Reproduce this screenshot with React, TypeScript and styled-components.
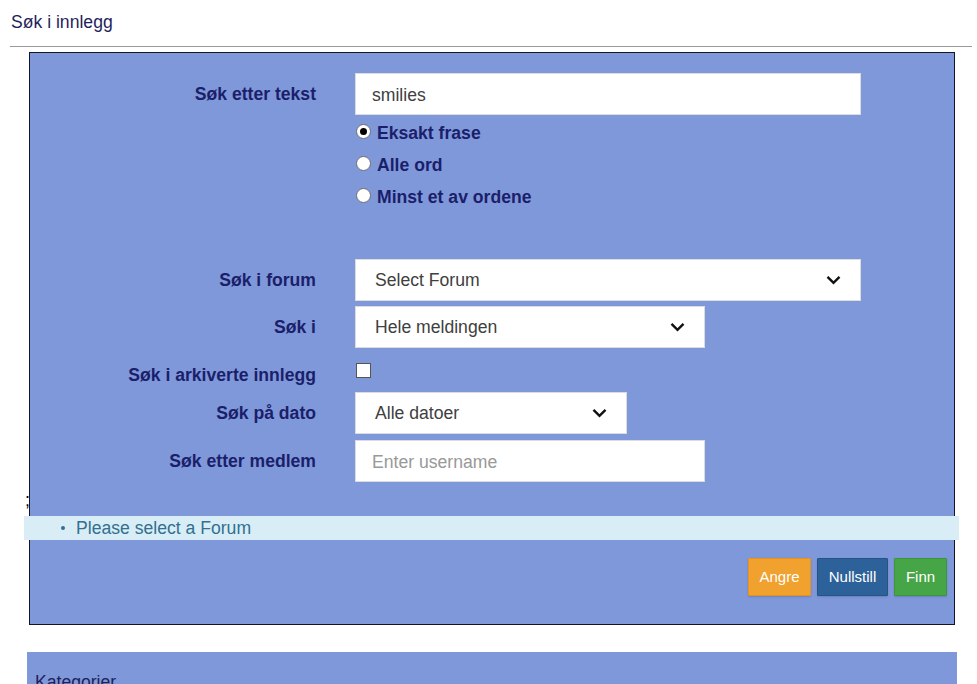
import React from "react";
import styled, { createGlobalStyle } from "styled-components";

const GlobalStyle = createGlobalStyle`
  html, body { margin: 0; padding: 0; background: #ffffff; }
  body { font-family: "Liberation Sans", Arial, sans-serif; }
  * { box-sizing: border-box; }
`;

const Page = styled.div`
  width: 977px;
  height: 684px;
  overflow: hidden;
`;

const Header = styled.div`
  margin: 0 5px 0 10px;
  padding: 12px 0 14px 1px;
  border-bottom: 1px solid #9a9a9a;
`;

const Title = styled.h1`
  margin: 0;
  font-size: 17.6px;
  line-height: 20px;
  font-weight: normal;
  color: #1f1f5c;
`;

const Panel = styled.form`
  margin: 5px 0 0 29px;
  width: 926px;
  background: #7f98da;
  border: 1px solid #141428;
  padding: 20px 0 28px 0;
`;

const FormRow = styled.div<{ $mt?: number; $h?: number; $top?: boolean }>`
  display: grid;
  grid-template-columns: 286px 1fr;
  column-gap: 39px;
  align-items: ${(p) => (p.$top ? "start" : "center")};
  margin-top: ${(p) => p.$mt ?? 0}px;
  height: ${(p) => (p.$h ? `${p.$h}px` : "auto")};
`;

const Label = styled.label<{ $pt?: number }>`
  text-align: right;
  font-size: 17.6px;
  line-height: 20px;
  font-weight: bold;
  color: #1b1f6b;
  padding-top: ${(p) => p.$pt ?? 0}px;
`;

const TextInput = styled.input<{ $w: number }>`
  width: ${(p) => p.$w}px;
  height: 42px;
  border: 1px solid #dcdcdc;
  background: #fff;
  padding: 2px 16px 0 16px;
  font-family: "Liberation Sans", Arial, sans-serif;
  font-size: 17.6px;
  color: #404040;
  outline: none;
  &::placeholder { color: #999; }
`;

const SelectBox = styled.div<{ $w: number }>`
  width: ${(p) => p.$w}px;
  height: 42px;
  border: 1px solid #dcdcdc;
  background: #fff;
  padding: 0 19px 0 19px;
  display: flex;
  align-items: center;
  justify-content: space-between;
  font-size: 17.6px;
  color: #404040;
`;

const RadioGroup = styled.div`
  display: flex;
  flex-direction: column;
  margin-top: 2px;
`;

const RadioRow = styled.label`
  display: flex;
  align-items: center;
  height: 32px;
  gap: 6px;
  font-size: 17.6px;
  font-weight: bold;
  color: #1b1f6b;
  padding-left: 1px;
`;

const RadioDot = styled.span<{ $checked?: boolean }>`
  width: 15px;
  height: 15px;
  border-radius: 50%;
  border: 1px solid #6e6e6e;
  background: #fff;
  margin-top: -4px;
  display: flex;
  align-items: center;
  justify-content: center;
  &::after {
    content: "";
    width: 7px;
    height: 7px;
    border-radius: 50%;
    background: ${(p) => (p.$checked ? "#000" : "transparent")};
  }
`;

const CheckBox = styled.span`
  display: block;
  width: 15px;
  height: 15px;
  margin-top: 15px;
  margin-left: 1px;
  border: 1px solid #555;
  background: #fff;
`;

const Semicolon = styled.div`
  margin: 8px 0 0 -5px;
  height: 20px;
  font-size: 17.6px;
  line-height: 20px;
  color: #000;
`;

const Alert = styled.ul`
  margin: 6px -5px 0 -6px;
  padding: 0 0 0 37px;
  height: 24px;
  background: #d9edf7;
  list-style: none;
  display: flex;
  align-items: center;
`;

const AlertItem = styled.li`
  display: flex;
  align-items: center;
  gap: 11px;
  font-size: 17.6px;
  color: #31708f;
`;

const Bullet = styled.span`
  width: 4px;
  height: 4px;
  border-radius: 50%;
  background: #31708f;
`;

const ButtonBar = styled.div`
  display: flex;
  justify-content: flex-end;
  gap: 6px;
  margin-top: 18px;
  padding-right: 7px;
`;

const Button = styled.button<{ $bg: string; $border: string; $w: number }>`
  width: ${(p) => p.$w}px;
  height: 38px;
  padding: 0 0 1px 0;
  background: ${(p) => p.$bg};
  border: 1px solid ${(p) => p.$border};
  border-radius: 1px;
  color: #fff;
  font-family: "Liberation Sans", Arial, sans-serif;
  font-size: 15px;
  box-shadow: 0 1px 2px rgba(0, 0, 0, 0.15);
`;

const CategoryPanel = styled.div`
  margin: 27px 0 0 27px;
  width: 930px;
  height: 60px;
  background: #7f98da;
  padding: 20px 0 0 8px;
  font-size: 17.6px;
  line-height: 20px;
  color: #1f1f5c;
`;

const Chevron = () => (
  <svg width="15" height="10" viewBox="0 0 15 10" fill="none">
    <path d="M1.5 1.8 L7.5 7.8 L13.5 1.8" stroke="#111" strokeWidth="2.4" />
  </svg>
);

export default function App() {
  return (
    <Page>
      <GlobalStyle />
      <Header>
        <Title>Søk i innlegg</Title>
      </Header>
      <Panel onSubmit={(e) => e.preventDefault()}>
        <FormRow>
          <Label>Søk etter tekst</Label>
          <TextInput $w={506} defaultValue="smilies" />
        </FormRow>
        <FormRow>
          <span />
          <RadioGroup>
            <RadioRow><RadioDot $checked />Eksakt frase</RadioRow>
            <RadioRow><RadioDot />Alle ord</RadioRow>
            <RadioRow><RadioDot />Minst et av ordene</RadioRow>
          </RadioGroup>
        </FormRow>
        <FormRow $mt={46}>
          <Label>Søk i forum</Label>
          <SelectBox $w={506}><span>Select Forum</span><Chevron /></SelectBox>
        </FormRow>
        <FormRow $mt={5}>
          <Label>Søk i</Label>
          <SelectBox $w={350}><span>Hele meldingen</span><Chevron /></SelectBox>
        </FormRow>
        <FormRow $h={44} $top>
          <Label $pt={17}>Søk i arkiverte innlegg</Label>
          <CheckBox />
        </FormRow>
        <FormRow>
          <Label>Søk på dato</Label>
          <SelectBox $w={272}><span>Alle datoer</span><Chevron /></SelectBox>
        </FormRow>
        <FormRow $mt={6}>
          <Label>Søk etter medlem</Label>
          <TextInput $w={350} placeholder="Enter username" />
        </FormRow>
        <Semicolon>;</Semicolon>
        <Alert>
          <AlertItem><Bullet />Please select a Forum</AlertItem>
        </Alert>
        <ButtonBar>
          <Button type="button" $w={63} $bg="#f0a12e" $border="#e39420">Angre</Button>
          <Button type="button" $w={71} $bg="#2c6199" $border="#245485">Nullstill</Button>
          <Button type="submit" $w={53} $bg="#46a546" $border="#3c943c">Finn</Button>
        </ButtonBar>
      </Panel>
      <CategoryPanel>Kategorier</CategoryPanel>
    </Page>
  );
}
